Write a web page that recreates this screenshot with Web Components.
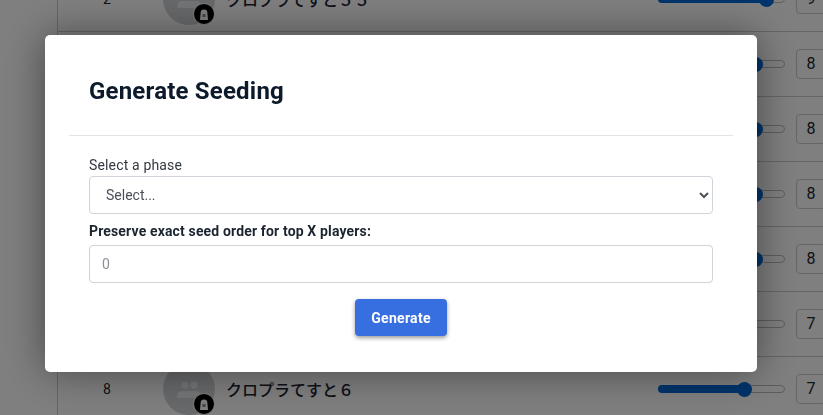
<!DOCTYPE html>
<html>
<head>
<meta charset="utf-8">
<title>Generate Seeding</title>
<style>
  html, body { margin: 0; height: 100%; overflow: hidden; background: #fff; }
  body { font-family: Roboto, "Noto Sans CJK JP", sans-serif; }
</style>
</head>
<body>

<seed-list>
  <seed-row seed="2" name="クロプラてすと５５" pct="86" value="9"></seed-row>
  <seed-row seed="3" name="クロプラてすと１" pct="77" value="8"></seed-row>
  <seed-row seed="4" name="クロプラてすと２" pct="77" value="8"></seed-row>
  <seed-row seed="5" name="クロプラてすと３" pct="77" value="8"></seed-row>
  <seed-row seed="6" name="クロプラてすと４" pct="77" value="8"></seed-row>
  <seed-row seed="7" name="クロプラてすと５" pct="68" value="7"></seed-row>
  <seed-row seed="8" name="クロプラてすと６" pct="68" value="7"></seed-row>
</seed-list>

<modal-dialog heading="Generate Seeding">
  <form-field label="Select a phase">
    <phase-select></phase-select>
  </form-field>
  <form-field label="Preserve exact seed order for top X players:" strong>
    <number-input placeholder="0"></number-input>
  </form-field>
  <primary-button>Generate</primary-button>
</modal-dialog>

<script>
// list behind the modal, scrolled so the first row is cut off
class SeedList extends HTMLElement {
  constructor() {
    super();
    this.attachShadow({ mode: "open" });
    this.shadowRoot.innerHTML = `
      <style>
        :host { display: block; margin: -33px -3px 0 57px; border-left: 1px solid #ccc; }
      </style>
      <slot></slot>`;
  }
}
customElements.define("seed-list", SeedList);

var template_row = document.createElement("template");
template_row.innerHTML = `
<style>
  :host {
    display: grid;
    grid-template-columns: 98px 52px 1fr 127px 41px;
    align-items: center;
    height: 64px;
    border-bottom: 1px solid #ccc;
    color: #212529;
    font-size: 14px;
  }
  .seed { text-align: center; }
  .avatar { position: relative; width: 52px; height: 52px; margin-left: 7px; border-radius: 50%; background: #cfd2d6; }
  .avatar > svg { display: block; }
  .badge {
    position: absolute; left: 30px; top: 30px;
    width: 20px; height: 20px; border-radius: 50%;
    background: #000; border: 1px solid #fff; box-sizing: content-box;
    display: flex; align-items: center; justify-content: center;
  }
  .name { padding-left: 18px; font: 500 16px "Noto Sans CJK JP", sans-serif; color: #1a2430; white-space: nowrap; }
  .box {
    width: 30px; height: 30px; margin-left: 11px; box-sizing: border-box;
    border: 1px solid #ccc; border-radius: 4px; background: #fff;
    font: 16px/28px Roboto, sans-serif; text-align: center;
  }
</style>
<div class="seed"></div>
<div class="avatar">
  <svg width="52" height="52" viewBox="0 0 52 52">
    <circle cx="22" cy="22" r="3.500" fill="#e9ebee"/>
    <circle cx="31" cy="22" r="3.500" fill="#e9ebee"/>
    <path d="M14 35v-2c0-3 2-5 5-5h14c3 0 5 2 5 5v2z" fill="#e9ebee"/>
  </svg>
  <div class="badge">
    <svg width="10" height="11" viewBox="0 0 10 11">
      <path d="M1 11l.6-7a3.400 3.400 0 0 1 6.800 0l.6 7z" fill="#fff"/>
      <rect x="3.500" y="5" width="3" height="3" fill="#8f8494"/>
    </svg>
  </div>
</div>
<div class="name"></div>
<seed-slider></seed-slider>
<div class="box"></div>
`;

class SeedRow extends HTMLElement {
  constructor() {
    super();
    this.attachShadow({ mode: "open" });
  }

  connectedCallback() {
    this.shadowRoot.appendChild(template_row.content.cloneNode(true));
    this.shadowRoot.querySelector(".seed").textContent = this.getAttribute("seed");
    this.shadowRoot.querySelector(".name").textContent = this.getAttribute("name");
    this.shadowRoot.querySelector(".box").textContent = this.getAttribute("value");
    this.shadowRoot.querySelector("seed-slider").setAttribute("pct", this.getAttribute("pct"));
  }
}
customElements.define("seed-row", SeedRow);

class SeedSlider extends HTMLElement {
  static get observedAttributes() { return ["pct"]; }
  constructor() {
    super();
    this.attachShadow({ mode: "open" });
    this.shadowRoot.innerHTML = `
      <style>
        :host { display: block; position: relative; height: 8px; box-sizing: border-box;
                border: 1px solid #bbb; border-radius: 4px; background: #fff; }
        .fill { position: absolute; left: -1px; top: -1px; height: 8px; border-radius: 4px; background: #0068d6; }
        .thumb { position: absolute; top: -4.500px; width: 15px; height: 15px; margin-left: -7.500px;
                 border-radius: 50%; background: #0068d6; }
      </style>
      <div class="fill"></div>
      <div class="thumb"></div>`;
  }
  attributeChangedCallback() {
    var pct = this.getAttribute("pct") + "%";
    this.shadowRoot.querySelector(".fill").style.width = pct;
    this.shadowRoot.querySelector(".thumb").style.left = pct;
  }
}
customElements.define("seed-slider", SeedSlider);

var template_modal = document.createElement("template");
template_modal.innerHTML = `
<style>
  :host {
    position: fixed; inset: 0; display: block;
    background: rgba(0, 0, 0, 0.5);
  }
  .dialog {
    position: absolute; left: 45px; top: 35px;
    width: 712px; height: 337px; box-sizing: border-box;
    background: #fff; border-radius: 5px;
    box-shadow: 0 0 40px rgba(0, 0, 0, 0.45);
    padding: 0 24px;
  }
  header { height: 101px; box-sizing: border-box; padding: 40px 20px 0; border-bottom: 1px solid #e2e4e7; }
  h2 { margin: 0; font: 700 24px/32px Roboto, sans-serif; color: #0c1a2b; letter-spacing: 0.2px; }
  .body { display: flex; flex-direction: column; padding: 21px 20px 0; }
</style>
<div class="dialog">
  <header><h2></h2></header>
  <div class="body"><slot></slot></div>
</div>
`;

class ModalDialog extends HTMLElement {
  constructor() {
    super();
    this.attachShadow({ mode: "open" });
  }
  connectedCallback() {
    this.shadowRoot.appendChild(template_modal.content.cloneNode(true));
    this.shadowRoot.querySelector("h2").textContent = this.getAttribute("heading");
  }
}
customElements.define("modal-dialog", ModalDialog);

class FormField extends HTMLElement {
  constructor() {
    super();
    this.attachShadow({ mode: "open" });
  }
  connectedCallback() {
    var strong = this.hasAttribute("strong");
    this.shadowRoot.innerHTML = `
      <style>
        :host { display: block; margin-bottom: 9px; }
        label {
          display: block; font: ${strong ? 700 : 400} 14px/17px Roboto, sans-serif;
          color: ${strong ? "#1b2530" : "#333a42"}; letter-spacing: 0.15px;
          margin-bottom: ${strong ? 5 : 2}px;
        }
      </style>
      <label>${this.getAttribute("label")}</label>
      <slot></slot>`;
  }
}
customElements.define("form-field", FormField);

class PhaseSelect extends HTMLElement {
  constructor() {
    super();
    this.attachShadow({ mode: "open" });
    this.shadowRoot.innerHTML = `
      <style>
        :host { display: block; }
        select {
          display: block; width: 100%; height: 38px; box-sizing: border-box;
          padding: 0 12px; background: #fff; color: #495057;
          border: 1px solid #ced4da; border-radius: 4px;
          font: 14px Roboto, sans-serif;
        }
      </style>
      <select><option>Select...</option></select>`;
  }
}
customElements.define("phase-select", PhaseSelect);

class NumberInput extends HTMLElement {
  constructor() {
    super();
    this.attachShadow({ mode: "open" });
  }
  connectedCallback() {
    this.shadowRoot.innerHTML = `
      <style>
        :host { display: block; }
        input {
          display: block; width: 100%; height: 38px; box-sizing: border-box;
          padding: 0 12px; background: #fff;
          border: 1px solid #ced4da; border-radius: 4px;
          font: 14px Roboto, sans-serif;
        }
        input::placeholder { color: #8a9097; opacity: 1; }
      </style>
      <input type="text" placeholder="${this.getAttribute("placeholder")}">`;
  }
}
customElements.define("number-input", NumberInput);

class PrimaryButton extends HTMLElement {
  constructor() {
    super();
    this.attachShadow({ mode: "open" });
    this.shadowRoot.innerHTML = `
      <style>
        :host { display: block; align-self: center; margin-top: 7px; }
        button {
          display: block; width: 92px; height: 37px; padding: 0;
          border: 0; border-radius: 4px; background: #376fe0; color: #fff;
          font: 700 14px Roboto, sans-serif; letter-spacing: 0.3px;
          box-shadow: 0 2px 4px rgba(0, 0, 0, 0.4);
        }
      </style>
      <button><slot></slot></button>`;
  }
}
customElements.define("primary-button", PrimaryButton);
</script>
</body>
</html>
